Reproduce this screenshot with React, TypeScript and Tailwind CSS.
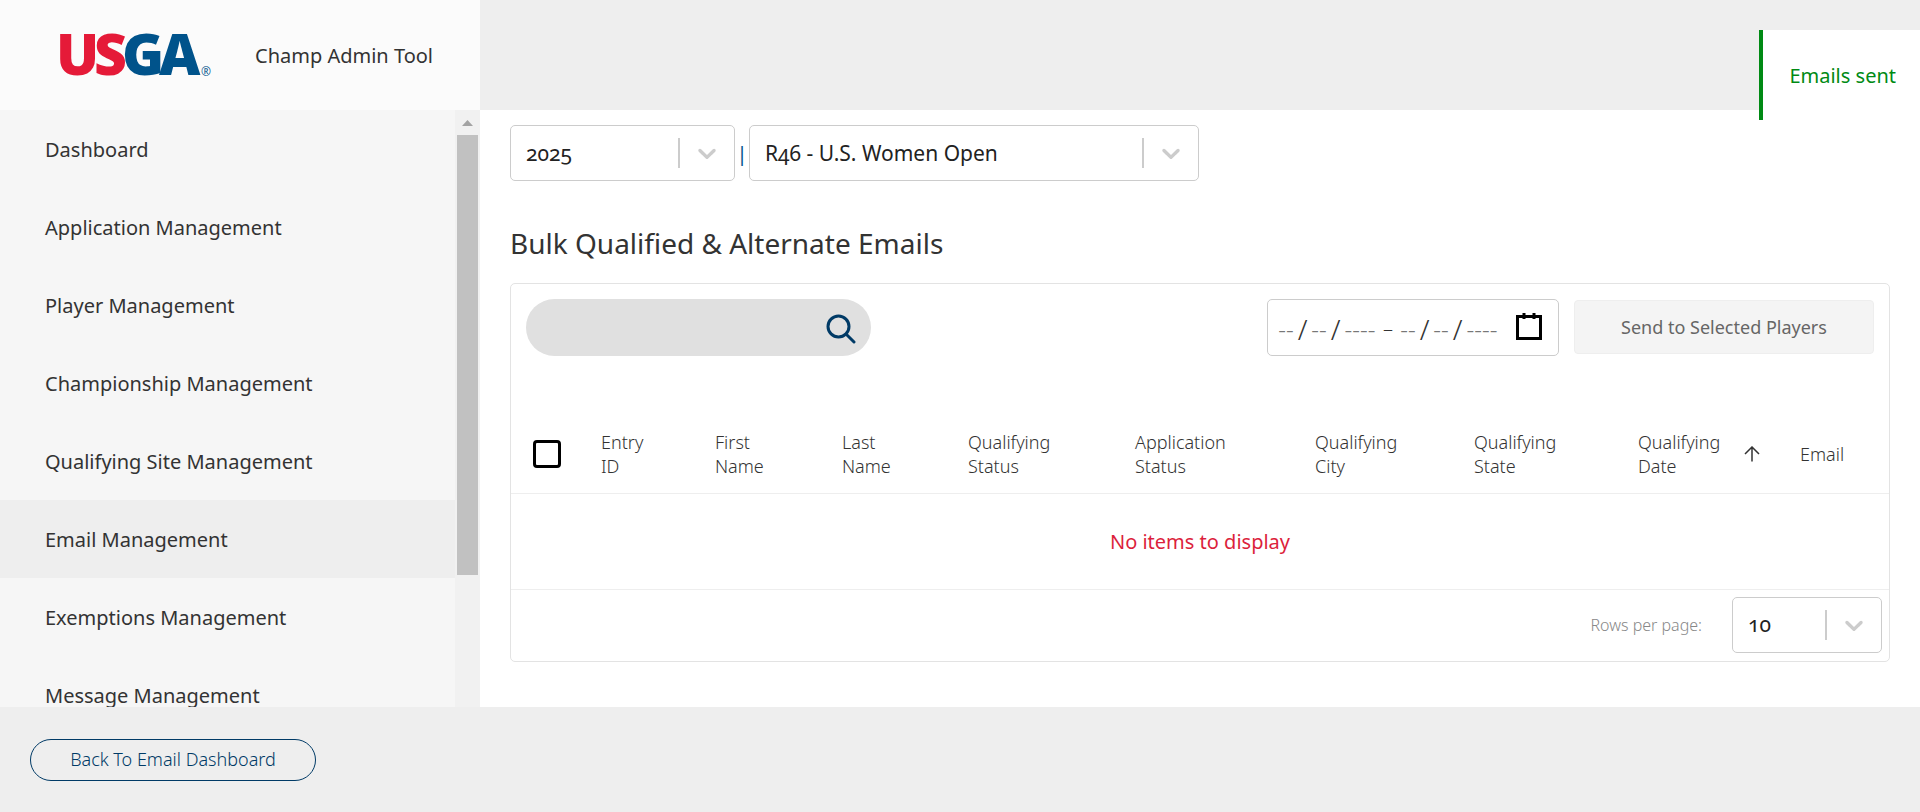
import React from "react";

const NAV_ITEMS = [
  "Dashboard",
  "Application Management",
  "Player Management",
  "Championship Management",
  "Qualifying Site Management",
  "Email Management",
  "Exemptions Management",
  "Message Management",
];
const ACTIVE_ITEM = "Email Management";

const COLUMNS = [
  { lines: ["Entry", "ID"], width: "w-[114px]" },
  { lines: ["First", "Name"], width: "w-[127px]" },
  { lines: ["Last", "Name"], width: "w-[126px]" },
  { lines: ["Qualifying", "Status"], width: "w-[167px]" },
  { lines: ["Application", "Status"], width: "w-[180px]" },
  { lines: ["Qualifying", "City"], width: "w-[159px]" },
  { lines: ["Qualifying", "State"], width: "w-[164px]" },
];

function Logo() {
  return (
    <svg
      viewBox="0 0 152 44"
      role="img"
      aria-label="USGA"
      className="h-11 w-[152px] shrink-0 overflow-visible"
      fontFamily="'Open Sans', 'Noto Sans', sans-serif"
      fontWeight="800"
      fontSize="57"
    >
      <text x="62" y="42" fill="#00538b">G</text>
      <text x="99" y="42" fill="#00538b">A</text>
      <text x="-4" y="42" fill="#e51a38">U</text>
      <text x="34" y="42" fill="#e51a38">S</text>
      <text x="141" y="43" fill="#00538b" fontSize="12" fontWeight="400">®</text>
    </svg>
  );
}

function Chevron() {
  return (
    <svg viewBox="0 0 20 20" aria-hidden="true" className="size-[30px] text-[#ccc]" fill="currentColor">
      <path d="M4.516 7.548c0.436-0.446 1.043-0.481 1.576 0l3.908 3.747 3.908-3.747c0.533-0.481 1.141-0.446 1.574 0 0.436 0.445 0.408 1.197 0 1.615-0.406 0.418-4.695 4.502-4.695 4.502-0.217 0.223-0.502 0.335-0.787 0.335s-0.570-0.112-0.789-0.335c0 0-4.287-4.084-4.695-4.502s-0.436-1.170 0-1.615z" />
    </svg>
  );
}

function Dropdown({ id, label, value, className }: { id: string; label: string; value: string; className: string }) {
  return (
    <div className={`relative h-14 ${className}`}>
      <select
        id={id}
        aria-label={label}
        defaultValue={value}
        className="size-full appearance-none rounded-[5px] border border-[#ccc] bg-white pt-px pr-16 pl-[15px] text-[21px] font-normal text-[#222] oldstyle-nums"
      >
        <option>{value}</option>
      </select>
      <span className="pointer-events-none absolute inset-y-3 right-px flex items-center">
        <span className="h-[30px] w-0.5 bg-[#ccc]" />
        <span className="px-3">
          <Chevron />
        </span>
      </span>
    </div>
  );
}

function DatePart({ label, blank, className }: { label: string; blank: string; className: string }) {
  return (
    <input
      type="text"
      aria-label={label}
      placeholder={blank}
      className={`bg-transparent text-center text-2xl placeholder:text-[#777] ${className}`}
    />
  );
}

function DateFields({ name }: { name: string }) {
  return (
    <span className="flex items-center pt-0.5">
      <DatePart label={`${name} month`} blank="--" className="w-4" />
      <span className="w-[17px] text-center text-[28px]">/</span>
      <DatePart label={`${name} day`} blank="--" className="w-4" />
      <span className="w-[17px] text-center text-[28px]">/</span>
      <DatePart label={`${name} year`} blank="----" className="w-8" />
    </span>
  );
}

export default function App() {
  return (
    <div className="flex h-screen flex-col bg-[#eee] font-['Noto_Sans',sans-serif] text-[#333]">
      <div className="flex min-h-0 flex-1">
        <div className="flex w-[480px] shrink-0 flex-col">
          <header className="flex h-[110px] shrink-0 items-center gap-[43px] bg-[#fbfbfb] px-[60px]">
            <Logo />
            <span className="pt-0.5 text-xl whitespace-nowrap">Champ Admin Tool</span>
          </header>
          <div className="flex min-h-0 flex-1">
            <nav className="flex-1 overflow-hidden bg-[#f6f6f6]">
              {NAV_ITEMS.map((item) => (
                <a
                  key={item}
                  href="#"
                  className={`flex h-[78px] items-center px-[45px] pt-0.5 text-xl ${item === ACTIVE_ITEM ? "bg-[#eee]" : ""}`}
                >
                  {item}
                </a>
              ))}
            </nav>
            <div aria-hidden="true" className="flex w-[25px] flex-col items-center bg-[#f1f1f1]">
              <svg viewBox="0 0 25 25" className="size-[25px] shrink-0" fill="#a3a3a3">
                <path d="M12.500 10 18 16H7z" />
              </svg>
              <div className="h-[440px] w-[21px] bg-[#c1c1c1]" />
            </div>
          </div>
        </div>

        <div className="flex min-w-0 flex-1 flex-col">
          <div className="h-[110px] shrink-0" />
          <main className="flex-1 bg-white px-[30px] pt-[15px]">
            <div className="flex items-center">
              <Dropdown id="year" label="Year" value="2025" className="w-[225px]" />
              <span className="w-[14px] pt-0.5 text-center text-xl text-[#00538b]">|</span>
              <Dropdown id="championship" label="Championship" value="R46 - U.S. Women Open" className="w-[450px]" />
            </div>

            <h1 className="mt-[42px] text-[28px] leading-10 font-[380]">Bulk Qualified &amp; Alternate Emails</h1>

            <section className="mt-5 rounded-[5px] border border-[#e3e3e3]">
              <div className="flex items-start p-[15px]">
                <form role="search" className="flex h-[57px] w-[345px] items-center rounded-full bg-[#e0e0e0] pr-[15px] pl-6">
                  <input type="search" aria-label="Search players" className="min-w-0 flex-1 bg-transparent text-xl outline-none" />
                  <button type="button" aria-label="Search" className="pt-0.5">
                    <svg viewBox="0 0 30 30" className="size-[30px]" fill="none" stroke="#003a66" strokeWidth="3" strokeLinecap="round">
                      <circle cx="12.500" cy="12.500" r="10.500" />
                      <path d="M20.500 20.500 28 28" />
                    </svg>
                  </button>
                </form>

                <div className="ml-auto flex h-[57px] w-[292px] items-center rounded-[5px] border border-[#ccc] pr-4 pl-[10px] font-light">
                  <DateFields name="Start" />
                  <span className="w-6 pt-0.5 text-center text-xl">–</span>
                  <DateFields name="End" />
                  <button type="button" aria-label="Open calendar" className="ml-auto pb-0.5">
                    <svg viewBox="0 0 26 28" className="h-7 w-[26px]" fill="none" stroke="#000" strokeWidth="3">
                      <path d="M1.500 3.500h23v22h-23zM8 0v6M18 0v6" />
                    </svg>
                  </button>
                </div>

                <button
                  type="button"
                  disabled
                  className="mt-px ml-[15px] h-[54px] w-[300px] rounded-[4px] border border-[#eee] bg-[#f4f4f4] text-lg text-[#666]"
                >
                  Send to Selected Players
                </button>
              </div>

              <table className="mt-[42px] w-full table-fixed text-left text-lg leading-6">
                <thead>
                  <tr className="h-20 border-b border-[#eee]">
                    <th className="w-[90px] pt-0.5 pl-[22px] align-middle">
                      <input
                        type="checkbox"
                        aria-label="Select all players"
                        className="block size-7 appearance-none rounded-[4px] border-3 border-black"
                      />
                    </th>
                    {COLUMNS.map((column) => (
                      <th key={column.lines.join(" ")} className={`pt-0.5 font-[350] ${column.width}`}>
                        {column.lines[0]}
                        <br />
                        {column.lines[1]}
                      </th>
                    ))}
                    <th className="w-[162px] pt-0.5 font-[350]">
                      <span className="flex items-center gap-6">
                        <span>
                          Qualifying
                          <br />
                          Date
                        </span>
                        <svg viewBox="0 0 16 16" aria-hidden="true" className="size-4" fill="none" stroke="#333" strokeWidth="1.500">
                          <path d="M8 15.500V1M1 8 8 1l7 7" />
                        </svg>
                      </span>
                    </th>
                    <th className="pt-0.5 font-[350]">Email</th>
                  </tr>
                </thead>
                <tbody>
                  <tr className="h-24 border-b border-[#eee]">
                    <td colSpan={10} className="pt-0.5 text-center text-xl text-[#dc1f3c]">
                      No items to display
                    </td>
                  </tr>
                </tbody>
              </table>

              <div className="flex items-center justify-end gap-[30px] px-[7px] pt-[7px] pb-2">
                <label htmlFor="rows" className="text-base font-light text-[#888]">
                  Rows per page:
                </label>
                <Dropdown id="rows" label="Rows per page" value="10" className="w-[150px]" />
              </div>
            </section>
          </main>
        </div>
      </div>

      <footer className="flex h-[105px] shrink-0 items-center px-[30px]">
        <button type="button" className="h-[42px] w-[286px] rounded-full border border-[#003a66] pb-0.5 text-lg font-[350] text-[#003a66]">
          Back To Email Dashboard
        </button>
      </footer>

      <div role="status" className="fixed top-[30px] right-0 flex h-[90px] items-center border-l-4 border-[#008a14] bg-white pt-0.5 pr-6 pl-[26px] text-xl text-[#008a14]">
        Emails sent
      </div>
    </div>
  );
}
